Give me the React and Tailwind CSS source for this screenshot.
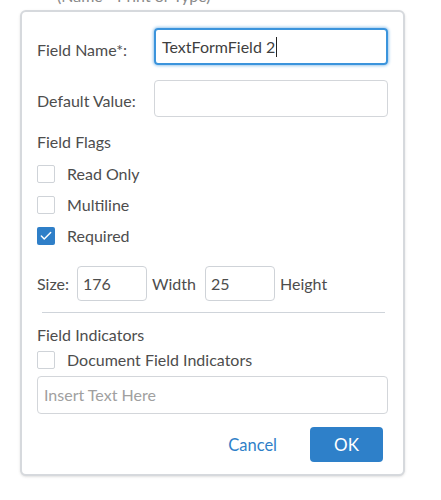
import { Check } from "lucide-react";

const Box = ({ checked }) =>
  checked ? (
    <span className="flex h-[18px] w-[18px] items-center justify-center rounded-[2px] bg-[#2f7fc8]">
      <Check size={14} strokeWidth={2.5} color="#fff" />
    </span>
  ) : (
    <span className="h-[18px] w-[18px] rounded-[2px] border border-[#cfd3d8] bg-white" />
  );

const Flag = ({ label, checked }) => (
  <div className="flex h-[18px] items-center gap-3">
    <Box checked={checked} />
    <span>{label}</span>
  </div>
);

export default function App() {
  return (
    <main
      className="h-[500px] w-[441px] overflow-hidden bg-white text-[16px] leading-6 text-[#4d4d4d]"
      style={{ fontFamily: "Lato, 'Open Sans', sans-serif" }}
    >
      <p className="-mt-[16px] h-[26px] pl-[57px] text-[#8a8a8a]">(Name - Print or Type)</p>
      <section className="ml-[20px] h-[466px] w-[385px] rounded-md border-2 border-[#d6d9dd] bg-white pl-[15px] pr-[15px] pt-[16px] shadow-sm">
        <div className="flex h-[37px] items-center">
          <span className="w-[117px] pt-[6px]">Field Name*:</span>
          <div className="flex h-[37px] flex-1 items-center rounded-[4px] border-2 border-[#3b94dc] px-[6px] shadow-[0_0_3px_1px_#9cc8ec]">
            <span className="text-[#3f3f3f]">TextFormField 2</span>
            <span className="ml-[1px] h-[20px] w-[1px] bg-[#222]" />
          </div>
        </div>
        <div className="mt-[15px] flex h-[37px] items-center">
          <span className="w-[117px] pt-[4px]">Default Value:</span>
          <div className="h-[37px] flex-1 rounded-[4px] border border-[#d3d6da]" />
        </div>
        <p className="mt-[13px]">Field Flags</p>
        <div className="mt-[11px] flex flex-col gap-[13px]">
          <Flag label="Read Only" />
          <Flag label="Multiline" />
          <Flag label="Required" checked />
        </div>
        <div className="mt-[21px] flex h-[35px] items-center">
          <span className="w-[40px]">Size:</span>
          <div className="flex h-[35px] w-[70px] items-center rounded-[4px] border border-[#cfd3d8] px-[5px]">176</div>
          <span className="ml-[5px] w-[53px]">Width</span>
          <div className="flex h-[35px] w-[70px] items-center rounded-[4px] border border-[#cfd3d8] px-[5px]">25</div>
          <span className="ml-[5px]">Height</span>
        </div>
        <hr className="ml-[5px] mr-[3px] mt-[11px] border-t border-[#cfd4da]" />
        <p className="mt-[10px]">Field Indicators</p>
        <div className="mt-[4px]">
          <Flag label="Document Field Indicators" />
        </div>
        <div className="mt-[7px] flex h-[38px] items-center rounded-[4px] border border-[#d3d6da] px-[6px] text-[#a0a0a0]">
          Insert Text Here
        </div>
        <div className="mt-[13px] flex items-center justify-end pr-[5px]">
          <button className="mr-[33px] text-[16.5px] text-[#2f7fc8]">Cancel</button>
          <button className="h-[35px] w-[73px] rounded-[4px] bg-[#2e80c9] text-[17px] text-white">OK</button>
        </div>
      </section>
    </main>
  );
}
